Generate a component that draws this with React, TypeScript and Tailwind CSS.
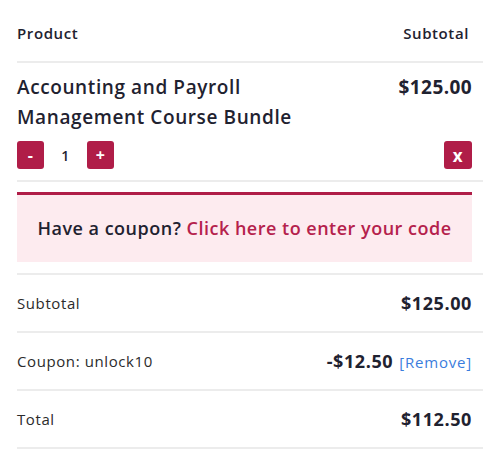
import { useState } from "react";

const font = { fontFamily: "'Open Sans', Lato, sans-serif" };

function TotalsRow({ label, children }: { label: string; children: React.ReactNode }) {
  return (
    <div className="flex items-center justify-between h-[58px] pr-[11px] border-b-2 border-[#ececec]">
      <span className="text-[15px] tracking-[0.6px] text-[#2b2b2b]">{label}</span>
      <div className="flex items-baseline gap-[6px]">{children}</div>
    </div>
  );
}

export default function App() {
  const [qty, setQty] = useState(1);

  return (
    <div className="w-[500px] h-[452px] bg-white px-[17px] text-[#1f2230] tracking-[0.6px]" style={font}>
      {/* header */}
      <div className="flex items-center justify-between h-[63px] pt-[6px] pr-[14px] border-b-2 border-[#ececec]">
        <span className="text-[15px] font-semibold">Product</span>
        <span className="text-[15px] font-semibold">Subtotal</span>
      </div>

      {/* item */}
      <div className="pt-[9px] pb-[11px] pr-[11px] border-b-2 border-[#ececec]">
        <div className="flex justify-between">
          <p className="text-[19px] font-semibold leading-[30px] w-[320px]">
            Accounting and Payroll Management Course Bundle
          </p>
          <span className="text-[19px] font-bold leading-[30px] tracking-[0.4px]">$125.00</span>
        </div>
        <div className="flex items-center justify-between mt-[9px]">
          <div className="flex items-center">
            <button
              onClick={() => setQty((q) => Math.max(1, q - 1))}
              className="w-[27px] h-[28px] rounded-[3px] bg-[#b01d48] text-white text-[16px] font-bold leading-none"
            >
              -
            </button>
            <span className="w-[43px] text-center text-[14px] font-semibold">{qty}</span>
            <button
              onClick={() => setQty((q) => q + 1)}
              className="w-[27px] h-[28px] rounded-[3px] bg-[#b01d48] text-white text-[16px] font-bold leading-none"
            >
              +
            </button>
          </div>
          <button className="w-[28px] h-[28px] rounded-[3px] bg-[#b01d48] text-white text-[17px] font-bold leading-none">
            x
          </button>
        </div>
      </div>

      {/* coupon notice */}
      <div className="mt-[10px] mb-[11px] mr-[11px] h-[70px] border-t-[3px] border-[#b01d48] bg-[#fdebef] flex items-center justify-center">
        <p className="text-[18px] font-semibold tracking-[0.5px]">
          Have a coupon? <a className="text-[#b5214c] cursor-pointer">Click here to enter your code</a>
        </p>
      </div>

      {/* totals */}
      <div className="border-t-2 border-[#ececec]">
        <TotalsRow label="Subtotal">
          <span className="text-[18px] font-bold">$125.00</span>
        </TotalsRow>
        <TotalsRow label="Coupon: unlock10">
          <span className="text-[18px] font-bold">-$12.50</span>
          <a className="text-[15px] tracking-[0.8px] text-[#3b7ddd] cursor-pointer">[Remove]</a>
        </TotalsRow>
        <TotalsRow label="Total">
          <span className="text-[18px] font-bold">$112.50</span>
        </TotalsRow>
      </div>
    </div>
  );
}
